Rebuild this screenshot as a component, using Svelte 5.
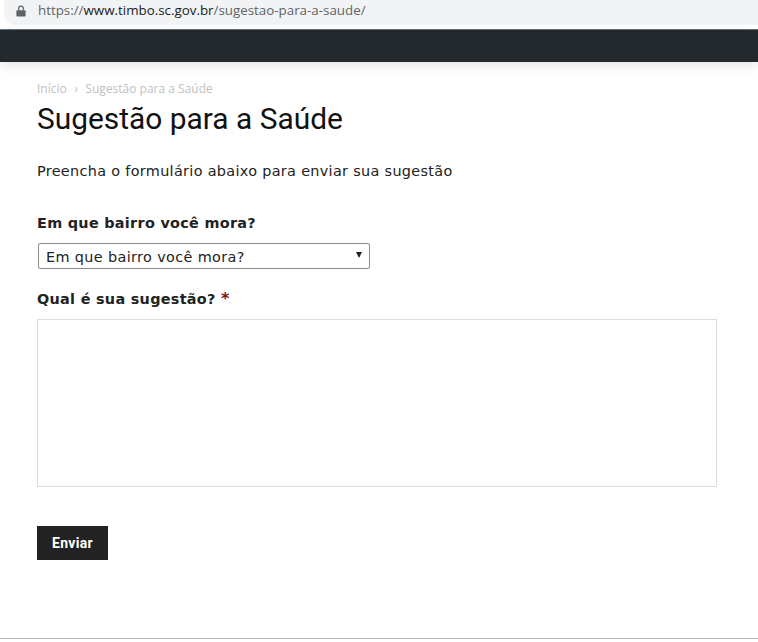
<script>
  const title = 'Sugestão para a Saúde';
</script>

<div class="browser">
  <div class="urlbar">
    <svg class="lock" width="10" height="12" viewBox="0 0 10 12" aria-hidden="true">
      <path d="M1 5.2h8a.6.6 0 0 1 .6.6v5a.7.7 0 0 1-.7.7H1.1a.7.7 0 0 1-.7-.7v-5a.6.6 0 0 1 .6-.6z" fill="#5f6368"/>
      <path d="M2.7 5.5V3.4a2.3 2.3 0 0 1 4.6 0v2.1" fill="none" stroke="#5f6368" stroke-width="1.2"/>
    </svg>
    <span class="url"><span class="scheme">https://</span><span class="host">www.timbo.sc.gov.br</span><span class="scheme">/sugestao-para-a-saude/</span></span>
  </div>
</div>
<header class="topbar"></header>

<main class="content">
  <nav class="crumbs"><span>Início</span><span class="sep">›</span><span>{title}</span></nav>
  <h1>{title}</h1>
  <p class="intro">Preencha o formulário abaixo para enviar sua sugestão</p>

  <form onsubmit={(e) => e.preventDefault()}>
    <label class="lbl" for="bairro">Em que bairro você mora?</label>
    <div class="select-wrap">
      <select id="bairro">
        <option>Em que bairro você mora?</option>
      </select>
    </div>
    <label class="lbl second" for="sug">Qual é sua sugestão? <span class="req">*</span></label>
    <textarea id="sug"></textarea>
    <button type="submit">Enviar</button>
  </form>
</main>
<div class="rule"></div>

<style>
  :global(body) {
    margin: 0;
    background: #fff;
    overflow: hidden;
  }
  .browser {
    height: 29px;
    box-sizing: border-box;
    padding-left: 4px;
  }
  .urlbar {
    height: 25px;
    background: #f1f3f4;
    border-bottom-left-radius: 12px;
    display: flex;
    align-items: center;
    padding-left: 13px;
    box-sizing: border-box;
  }
  .lock {
    margin-right: 12px;
    margin-top: -3px;
    margin-left: -1px;
  }
  .url {
    font: 13.35px/1 "Open Sans", "Noto Sans", sans-serif;
    color: #5f6368;
    margin-top: -3px;
    white-space: nowrap;
  }
  .host {
    color: #202124;
  }
  .topbar {
    height: 32px;
    background: #22282c;
    border-top: 1px solid #6b6f72;
    box-shadow: 0 4px 12px rgba(0, 0, 0, 0.1);
  }
  .content {
    padding: 19px 41px 0 37px;
    height: 576px;
    box-sizing: border-box;
    color: #222;
    font-family: "DejaVu Sans", Verdana, sans-serif;
  }
  .crumbs {
    font: 12px/15px "Open Sans", sans-serif;
    color: #c0c0c0;
    display: flex;
    gap: 6px;
    height: 15px;
  }
  .sep {
    margin: 0 1.5px;
  }
  h1 {
    font: 400 29.9px/36px Roboto, sans-serif;
    color: #111;
    margin: 5px 0 0;
  }
  .intro {
    font-size: 14.4px;
    letter-spacing: 0.33px;
    line-height: 20px;
    margin: 24px 0 0;
  }
  form {
    display: flex;
    flex-direction: column;
    align-items: flex-start;
  }
  .lbl {
    font-weight: 700;
    font-size: 14.4px;
    letter-spacing: 0.3px;
    line-height: 20px;
    margin-top: 32px;
  }
  .lbl.second {
    margin-top: 20px;
  }
  .req {
    color: #7a1020;
    font-size: 16px;
  }
  .select-wrap {
    position: relative;
    margin: 10px 0 0 1px;
    width: 332px;
    height: 26px;
  }
  .select-wrap::after {
    content: "";
    position: absolute;
    right: 8px;
    top: 9px;
    border-left: 3px solid transparent;
    border-right: 3px solid transparent;
    border-top: 6px solid #222;
    pointer-events: none;
  }
  select {
    appearance: none;
    width: 100%;
    height: 100%;
    margin: 0;
    padding: 2px 0 0 7px;
    font-family: inherit;
    font-size: 14.4px;
    letter-spacing: 0.37px;
    color: #222;
    background: #fff;
    border: 1px solid #8a8a8a;
    border-radius: 2px;
    display: block;
  }
  textarea {
    width: 680px;
    height: 168px;
    box-sizing: border-box;
    margin-top: 10px;
    border: 1px solid #ddd;
    background: #fff;
    resize: none;
    display: block;
    outline: none;
  }
  button {
    margin-top: 39px;
    width: 71px;
    height: 34px;
    background: #222;
    color: #fff;
    border: 0;
    font: 700 14px/34px Roboto, sans-serif;
    letter-spacing: 0.3px;
    padding: 0;
  }
  .rule {
    height: 1px;
    background: #b5b5b5;
  }
</style>
